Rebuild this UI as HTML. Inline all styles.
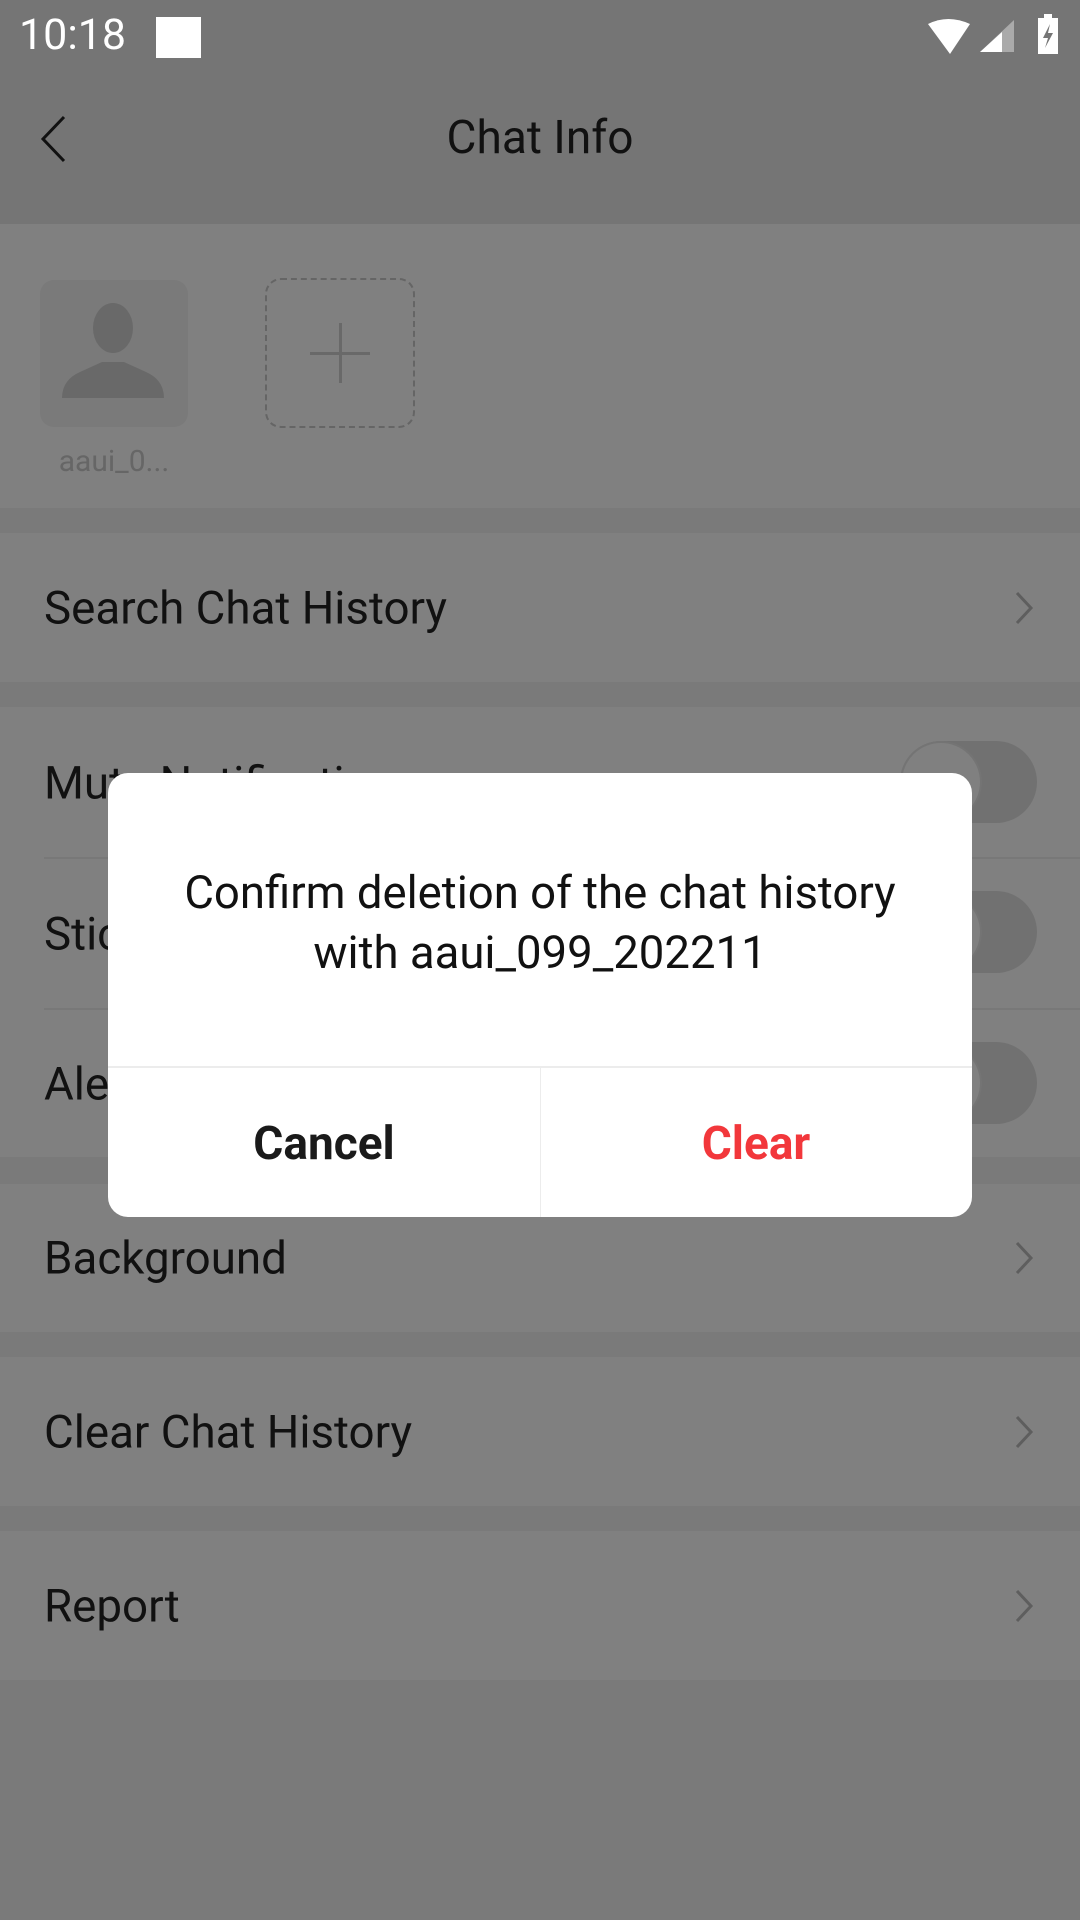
<!DOCTYPE html>
<html><head><meta charset="utf-8"><style>
*{margin:0;padding:0;box-sizing:border-box}
body{width:1080px;height:1920px;background:#7a7a7a;font-family:"Roboto","Liberation Sans",sans-serif;position:relative;overflow:hidden}
.abs{position:absolute}
.row{position:absolute;left:0;width:1080px;background:#808080;color:#111;font-size:45.7px}
.row span{position:absolute;left:44px;top:50%;transform:translateY(-48%)}
.chev{position:absolute;right:46px;top:50%;transform:translateY(-50%)}
.tog{position:absolute;left:900px;width:137px;height:82px;border-radius:41px;background:#717171}
.tog i{position:absolute;left:0;top:0;width:82px;height:82px;border-radius:50%;background:#808080;border:2px solid #747474}
.div{position:absolute;left:44px;right:0;height:2px;background:#787878}
</style></head><body>
<div class="abs" style="left:0;top:0;width:1080px;height:224px;background:#757575"></div>
<div class="abs" style="left:19px;top:10px;font-size:43px;color:#fff">10:18</div>
<div class="abs" style="left:156px;top:17px;width:45px;height:41px;background:#fff"></div>
<svg class="abs" style="left:920px;top:14px" width="160" height="42" viewBox="0 0 160 42">
<path d="M8 8 Q28 -2 50 8 L30 38 Z" fill="#fff" transform="translate(0,2)"/>
<path d="M60 38 L94 6 L94 38 Z" fill="#aaa"/><path d="M60 38 L82 18 L82 38 Z" fill="#fff"/>
<rect x="118" y="4" width="20" height="36" fill="#fff"/><rect x="124" y="0" width="8" height="5" fill="#fff"/>
<path d="M130 10 L123 24 L128 24 L125 34 L133 19 L128 19 Z" fill="#757575"/>
</svg>
<svg class="abs" style="left:38px;top:114px" width="30" height="50"><path d="M26 3 L5 25 L26 47" fill="none" stroke="#111" stroke-width="3"/></svg>
<div class="abs" style="left:0;width:1080px;top:111px;text-align:center;font-size:46px;color:#111">Chat Info</div>

<div class="abs" style="left:0;top:224px;width:1080px;height:284px;background:#808080"></div>
<div class="abs" style="left:40px;top:280px;width:148px;height:147px;border-radius:14px;background:#7a7a7a"></div>
<svg class="abs" style="left:40px;top:280px" width="148" height="147"><ellipse cx="73" cy="48" rx="20" ry="25" fill="#696969"/><path d="M22 118 Q22 100 40 92 L62 82 L84 82 L106 92 Q124 100 124 118 Z" fill="#696969"/></svg>
<div class="abs" style="left:265px;top:278px;width:150px;height:150px;border:2px dashed #656565;border-radius:16px"></div>
<div class="abs" style="left:310px;top:352px;width:60px;height:3px;background:#696969"></div>
<div class="abs" style="left:339px;top:323px;width:3px;height:60px;background:#696969"></div>
<div class="abs" style="left:30px;width:168px;top:444px;text-align:center;font-size:30px;color:#666">aaui_0...</div>

<div class="row" style="top:533px;height:149px"><span>Search Chat History</span><svg class="chev" width="20" height="36"><path d="M3 3 L17 18 L3 33" fill="none" stroke="#5e5e5e" stroke-width="3"/></svg></div>
<div class="row" style="top:707px;height:450px"></div>
<div class="row" style="top:707px;height:152px;background:none"><span>Mute Notifications</span></div>
<div class="div" style="top:857px"></div>
<div class="row" style="top:859px;height:150px;background:none"><span>Sticky on Top</span></div>
<div class="div" style="top:1008px"></div>
<div class="row" style="top:1010px;height:147px;background:none"><span>Alert</span></div>
<div class="tog" style="top:741px"><i></i></div>
<div class="tog" style="top:891px"><i></i></div>
<div class="tog" style="top:1042px"><i></i></div>
<div class="row" style="top:1184px;height:148px"><span>Background</span><svg class="chev" width="20" height="36"><path d="M3 3 L17 18 L3 33" fill="none" stroke="#5e5e5e" stroke-width="3"/></svg></div>
<div class="row" style="top:1357px;height:149px"><span>Clear Chat History</span><svg class="chev" width="20" height="36"><path d="M3 3 L17 18 L3 33" fill="none" stroke="#5e5e5e" stroke-width="3"/></svg></div>
<div class="row" style="top:1531px;height:149px"><span>Report</span><svg class="chev" width="20" height="36"><path d="M3 3 L17 18 L3 33" fill="none" stroke="#5e5e5e" stroke-width="3"/></svg></div>

<div class="abs" style="left:108px;top:773px;width:864px;height:444px;background:#fff;border-radius:20px;overflow:hidden">
<div class="abs" style="left:0;width:864px;top:91px;text-align:center;font-size:45.5px;line-height:60px;color:#111">Confirm deletion of the chat history<br>with aaui_099_202211</div>
<div class="abs" style="left:0;top:293px;width:864px;height:2px;background:#ececec"></div>
<div class="abs" style="left:432px;top:295px;width:1px;height:150px;background:#ececec"></div>
<div class="abs" style="left:0;width:432px;top:344px;text-align:center;font-size:46px;font-weight:bold;color:#1a1a1a">Cancel</div>
<div class="abs" style="left:432px;width:432px;top:344px;text-align:center;font-size:46px;font-weight:bold;color:#f2373b">Clear</div>
</div>
</body></html>
